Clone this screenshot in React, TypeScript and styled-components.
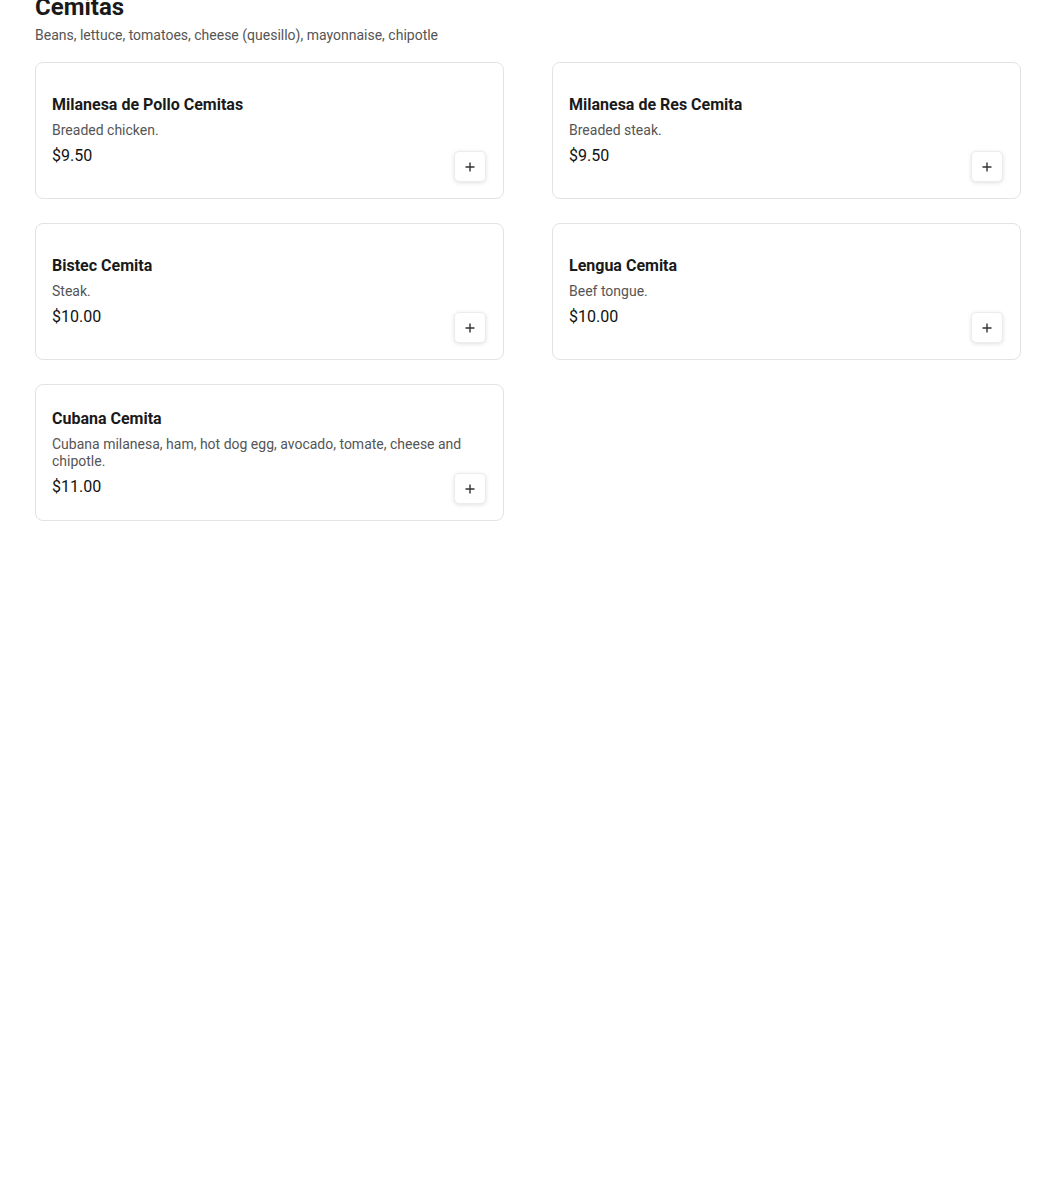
import React from "react";
import styled, { createGlobalStyle } from "styled-components";

const Global = createGlobalStyle`
  html, body { margin: 0; padding: 0; background: #fff; }
  body { font-family: Roboto, "Liberation Sans", Arial, sans-serif; color: #1a1a1a; }
`;

const Page = styled.div`
  padding: 0 29px 0 35px;
  margin-top: -9px;
`;

const Heading = styled.h2`
  margin: 0;
  font-size: 24px;
  line-height: 32px;
  font-weight: 700;
  color: #1a1a1a;
`;

const Subtitle = styled.p`
  margin: 2px 0 0;
  font-size: 14px;
  line-height: 20px;
  color: #555;
`;

const Grid = styled.div`
  margin-top: 17px;
  display: grid;
  grid-template-columns: 1fr 1fr;
  column-gap: 48px;
  row-gap: 24px;
`;

const Card = styled.div`
  position: relative;
  box-sizing: border-box;
  height: 137px;
  border: 1px solid #e3e3e3;
  border-radius: 8px;
  padding: 1px 16px 0;
  display: flex;
  flex-direction: column;
  justify-content: center;
  background: #fff;
`;

const Title = styled.div`
  font-size: 16px;
  line-height: 20px;
  font-weight: 700;
  color: #1a1a1a;
  margin-bottom: 7px;
`;

const Desc = styled.div`
  font-size: 14px;
  line-height: 17px;
  color: #555;
  margin-bottom: 6px;
  padding-right: 24px;
`;

const Price = styled.div`
  font-size: 16px;
  line-height: 22px;
  font-weight: 400;
  color: #111;
`;

const AddButton = styled.button`
  position: absolute;
  right: 17px;
  bottom: 16px;
  width: 32px;
  height: 31px;
  box-sizing: border-box;
  padding: 0;
  border: 1px solid #ececec;
  border-radius: 5px;
  background: #fff;
  box-shadow: 0 1px 4px rgba(0, 0, 0, 0.12);
  display: flex;
  align-items: center;
  justify-content: center;
  cursor: pointer;
`;

const items = [
  { name: "Milanesa de Pollo Cemitas", desc: "Breaded chicken.", price: "$9.50" },
  { name: "Milanesa de Res Cemita", desc: "Breaded steak.", price: "$9.50" },
  { name: "Bistec Cemita", desc: "Steak.", price: "$10.00" },
  { name: "Lengua Cemita", desc: "Beef tongue.", price: "$10.00" },
  {
    name: "Cubana Cemita",
    desc: "Cubana milanesa, ham, hot dog egg, avocado, tomate, cheese and chipotle.",
    price: "$11.00",
  },
];

const Plus = () => (
  <svg width="12" height="12" viewBox="0 0 12 12" fill="none">
    <path d="M6 1.5v9M1.5 6h9" stroke="#333" strokeWidth="1.4" />
  </svg>
);

export default function App() {
  return (
    <>
      <Global />
      <Page>
        <Heading>Cemitas</Heading>
        <Subtitle>Beans, lettuce, tomatoes, cheese (quesillo), mayonnaise, chipotle</Subtitle>
        <Grid>
          {items.map((it) => (
            <Card key={it.name}>
              <Title>{it.name}</Title>
              <Desc>{it.desc}</Desc>
              <Price>{it.price}</Price>
              <AddButton aria-label="Add">
                <Plus />
              </AddButton>
            </Card>
          ))}
        </Grid>
      </Page>
    </>
  );
}
